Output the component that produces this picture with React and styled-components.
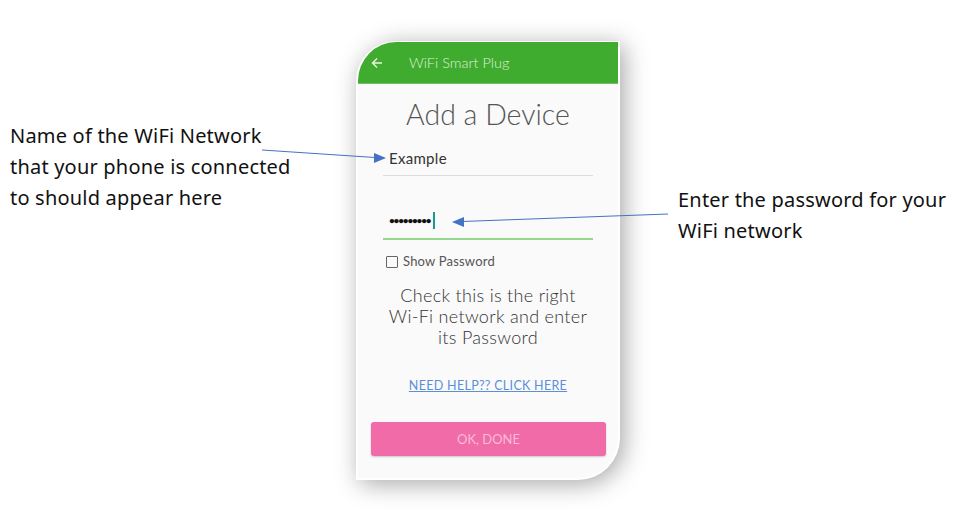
import React from "react";
import styled, { createGlobalStyle } from "styled-components";

const GlobalStyle = createGlobalStyle`
	html, body {
		margin: 0;
		padding: 0;
		background: #ffffff;
	}
	body {
		font-family: "Open Sans", "Noto Sans", sans-serif;
	}
`;

const Page = styled.div`
	position: relative;
	width: 965px;
	height: 519px;
	display: flex;
	align-items: flex-start;
	overflow: hidden;
`;

const Note = styled.div`
	font-family: "Noto Sans", "Open Sans", sans-serif;
	font-size: 20px;
	letter-spacing: 0.2px;
	line-height: 31px;
	color: #111;
	width: ${(p) => p.width}px;
	padding-left: ${(p) => p.left}px;
	padding-top: ${(p) => p.top}px;
	box-sizing: border-box;
	flex-shrink: 0;
	white-space: nowrap;
`;

const Phone = styled.div`
	width: 264px;
	height: 439px;
	margin-top: 41px;
	box-sizing: border-box;
	border: 2px solid #ffffff;
	border-top-width: 1px;
	border-radius: 40px 0 42px 0;
	background: #fafafa;
	box-shadow: 4px 4px 24px rgba(0, 0, 0, 0.35);
	overflow: hidden;
	display: flex;
	flex-direction: column;
	align-items: stretch;
	font-family: "Lato", "Open Sans", sans-serif;
	flex-shrink: 0;
`;

const Header = styled.div`
	height: 42px;
	background: #40ac2f;
	border-bottom: 1px solid #6cc25e;
	box-sizing: border-box;
	display: flex;
	align-items: center;
	padding-left: 13px;
	gap: 26px;
	color: #dff0d8;
	font-size: 14.5px;
	font-weight: 300;
`;

const Title = styled.div`
	margin-top: 13px;
	text-align: center;
	font-size: 28.5px;
	line-height: 34px;
	font-weight: 300;
	color: #555;
`;

const Field = styled.div`
	margin: ${(p) => p.top}px 25px 0 25px;
	height: 30px;
	display: flex;
	align-items: center;
	padding: 0 0 ${(p) => p.pb}px 6px;
	box-sizing: border-box;
	border-bottom: ${(p) => (p.active ? "2px solid #96d68d" : "1px solid #dcdcdc")};
	font-size: 15px;
	letter-spacing: 0.3px;
	color: #333;
`;

const Dots = styled.span`
	letter-spacing: -1.2px;
	font-size: 10px;
	font-weight: 700;
	color: #111;
`;

const Caret = styled.span`
	display: inline-block;
	width: 1.5px;
	height: 17px;
	background: #1a9c8a;
	margin-left: 3px;
`;

const CheckRow = styled.label`
	margin: 14px 0 0 28px;
	display: flex;
	align-items: center;
	gap: 5px;
	font-size: 13px;
	letter-spacing: 0.2px;
	color: #555;
	font-weight: 400;
	line-height: 15px;
`;

const Box = styled.span`
	width: 10px;
	height: 10px;
	border: 1.5px solid #666;
	border-radius: 1px;
`;

const Message = styled.div`
	margin-top: 16px;
	text-align: center;
	font-size: 18px;
	letter-spacing: 0.3px;
	line-height: 21px;
	font-weight: 300;
	color: #333;
	padding: 0 10px;
`;

const HelpLink = styled.a`
	margin-top: 30px;
	align-self: center;
	font-size: 12.5px;
	letter-spacing: 0.3px;
	line-height: 16px;
	color: #5b8edb;
	text-decoration: underline;
	font-weight: 400;
`;

const Button = styled.div`
	margin: 28px 12px 0 13px;
	height: 34px;
	background: #f06ba8;
	border-radius: 3px;
	box-shadow: 0 1px 2px rgba(0, 0, 0, 0.2);
	display: flex;
	align-items: center;
	justify-content: center;
	color: #f8bcd8;
	font-size: 13px;
	font-weight: 400;
`;

const Arrows = styled.svg`
	position: absolute;
	left: 0;
	top: 0;
	pointer-events: none;
`;

const BackArrow = () => (
	<svg width="12" height="12" viewBox="0 0 12 12" fill="none" stroke="#e8f4e4" strokeWidth="1.4">
		<path d="M11 6H1.5M6 1.5L1.5 6L6 10.5" />
	</svg>
);

const App = () => {
	return (
		<Page>
			<GlobalStyle />
			<Note width={356} left={10} top={120}>
				Name of the WiFi Network
				<br />
				that your phone is connected
				<br />
				to should appear here
			</Note>
			<Phone>
				<Header>
					<BackArrow />
					<span>WiFi Smart Plug</span>
				</Header>
				<Title>Add a Device</Title>
				<Field top={15} pb={6}>Example</Field>
				<Field top={34} pb={8} active>
					<Dots>•••••••••</Dots>
					<Caret />
				</Field>
				<CheckRow>
					<Box />
					Show Password
				</CheckRow>
				<Message>
					Check this is the right
					<br />
					Wi-Fi network and enter
					<br />
					its Password
				</Message>
				<HelpLink>NEED HELP?? CLICK HERE</HelpLink>
				<Button>OK, DONE</Button>
			</Phone>
			<Note width={345} left={58} top={184}>
				Enter the password for your
				<br />
				WiFi network
			</Note>
			<Arrows width="965" height="519" viewBox="0 0 965 519">
				<line x1="262" y1="150" x2="375" y2="157.5" stroke="#4472c4" strokeWidth="1" />
				<polygon points="386,158 374,153 374,163" fill="#4472c4" />
				<line x1="668" y1="214" x2="462" y2="221.5" stroke="#4472c4" strokeWidth="1" />
				<polygon points="452,222 464,217 464,227" fill="#4472c4" />
			</Arrows>
		</Page>
	);
};

export default App;
